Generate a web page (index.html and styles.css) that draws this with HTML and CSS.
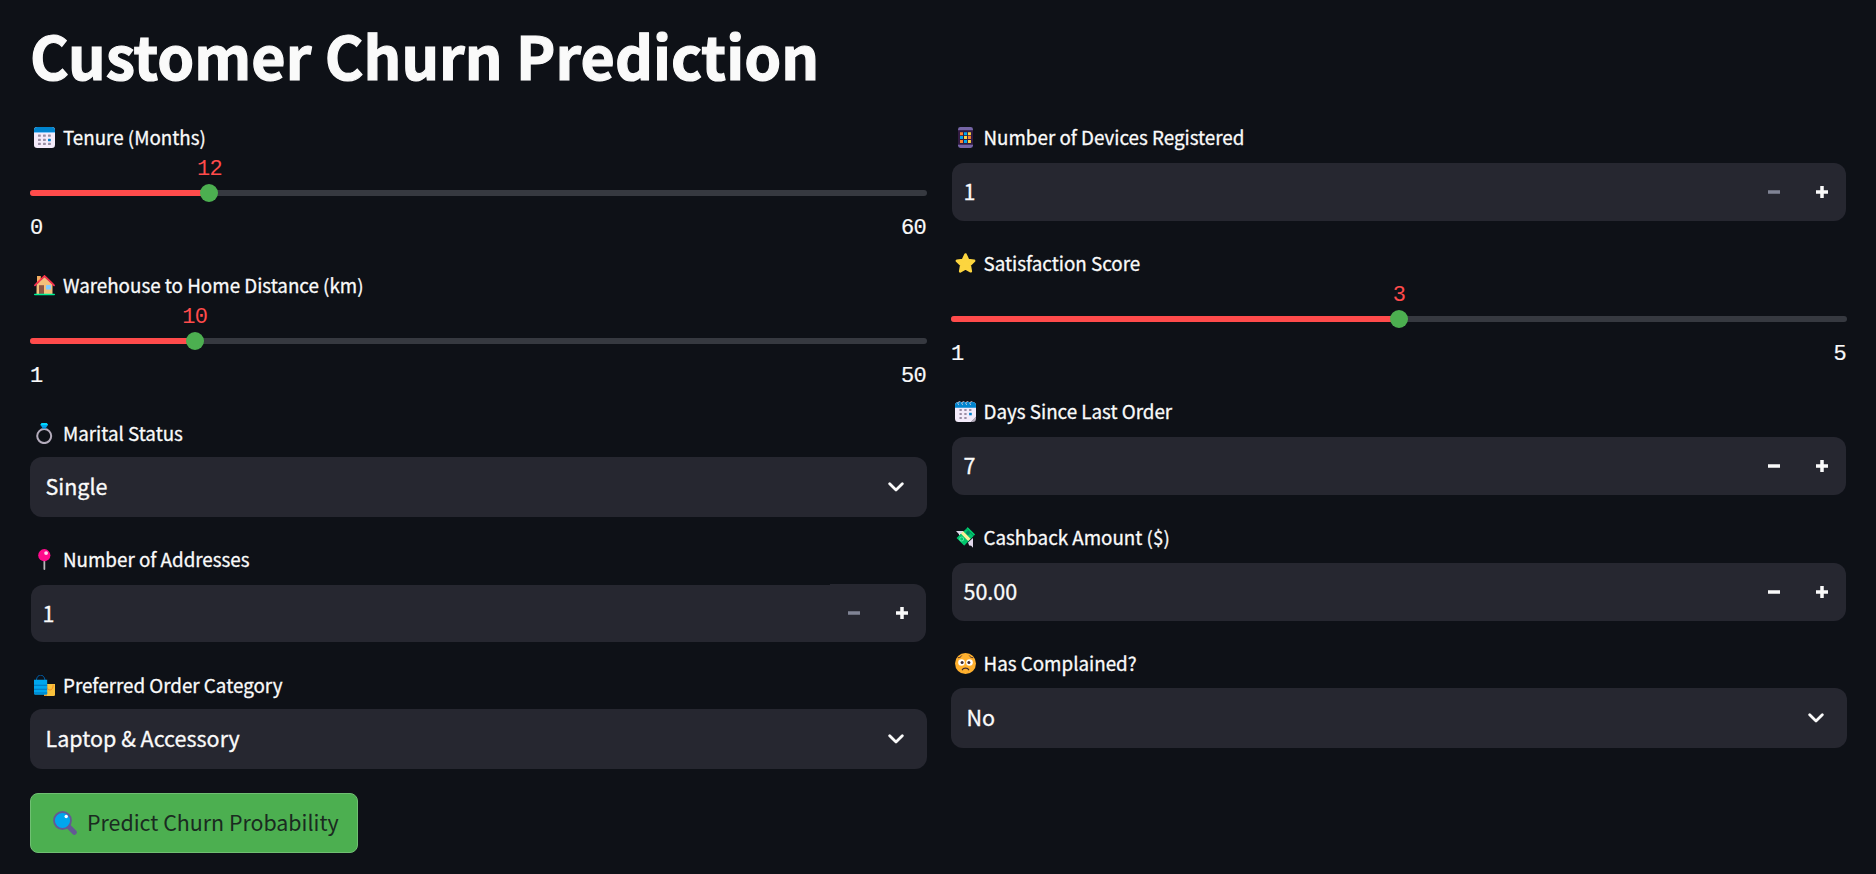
FILE: index.html
```html
<!DOCTYPE html>
<html lang="en">
<head>
<meta charset="utf-8">
<title>Customer Churn Prediction</title>
<link rel="stylesheet" href="styles.css">
</head>
<body>
<main class="page">
  <h1 class="title">Customer Churn Prediction</h1>
  <div class="columns">
    <section class="column">
      <div class="widget">
        <div class="label">
          <svg class="icon" viewBox="0 0 21 21"><rect width="21" height="21" rx="3.2" fill="#f3ebfa"/><path d="M0 5.6V3.2A3.2 3.2 0 0 1 3.2 0h14.6A3.2 3.2 0 0 1 21 3.2v2.4z" fill="#0084ce"/><path d="M0 5.2h21v.7H0z" fill="#83cbff"/><g fill="#998ea4"><rect x="4" y="7.4" width="2.8" height="2.3" rx=".5"/><rect x="9" y="7.4" width="2.8" height="2.3" rx=".5"/><rect x="14" y="7.4" width="2.8" height="2.3" rx=".5"/><rect x="4" y="11.8" width="2.8" height="2.3" rx=".5"/><rect x="9" y="11.8" width="2.8" height="2.3" rx=".5"/><rect x="4" y="15.8" width="2.8" height="2.3" rx=".5"/><rect x="9" y="15.8" width="2.8" height="2.3" rx=".5"/><rect x="14" y="15.8" width="2.8" height="2.3" rx=".5"/></g><rect x="14" y="11.7" width="2.8" height="2.5" rx=".5" fill="#0084ce"/></svg>
          <span>Tenure (Months)</span>
        </div>
        <div class="slider">
          <div class="track"><div class="fill" style="width:20%"></div><div class="thumb" style="left:20%"><span class="value">12</span></div></div>
          <div class="range"><span>0</span><span>60</span></div>
        </div>
      </div>
      <div class="widget">
        <div class="label">
          <svg class="icon" viewBox="0 0 21 21"><path d="M3 1h4v6H3z" fill="#d3883e"/><path d="M3 1h3v6H3z" fill="#f3ad61"/><path d="M2.6 9.5 10.5 2l8 7.5v10h-16z" fill="#f3c07b"/><path d="M.9 10.3 10.5 1l9.6 9.3" fill="none" stroke="#f92f60" stroke-width="1.7" stroke-linecap="round"/><path d="M1.4 9.2 10.5.5l9.1 8.7" fill="none" stroke="#ff3b30" stroke-width=".8"/><path d="M5 10.2h5v8.8H5z" fill="#8c5543"/><rect x="12" y="10" width="5" height="4.6" rx=".5" fill="#83cbff"/><rect x="0" y="18.7" width="21" height="1.6" rx=".8" fill="#00f397"/></svg>
          <span>Warehouse to Home Distance (km)</span>
        </div>
        <div class="slider">
          <div class="track"><div class="fill" style="width:18.367%"></div><div class="thumb" style="left:18.367%"><span class="value">10</span></div></div>
          <div class="range"><span>1</span><span>50</span></div>
        </div>
      </div>
      <div class="widget">
        <div class="label">
          <svg class="icon" viewBox="0 0 21 21"><circle cx="10.2" cy="13.1" r="7" fill="none" stroke="#b4acbc" stroke-width="2"/><path d="m6.4 2 1.3-2h5l1.3 2-2.6 3.4H9z" fill="#00a6ed"/><path d="m6.4 2 1.3-2h5l1.3 2z" fill="#00d8ff"/><path d="M8.2 4.2h4v1.2h-4z" fill="#0084ce"/></svg>
          <span>Marital Status</span>
        </div>
        <div class="select"><span>Single</span><svg class="chevron" viewBox="0 0 16 10"><path d="m1.7 1.7 6.3 6.2 6.3-6.2"/></svg></div>
      </div>
      <div class="widget">
        <div class="label">
          <svg class="icon" viewBox="0 0 21 21"><path d="M9.7 11h1.6v9.4l-.8.6-.8-.6z" fill="#9b9b9b"/><path d="M9.7 11h.8v10l-.8-.6z" fill="#d3d3d3"/><circle cx="10.3" cy="6.2" r="6.1" fill="#ff0a8c"/><circle cx="12.1" cy="4.1" r="1.9" fill="#ffd9ee"/></svg>
          <span>Number of Addresses</span>
        </div>
        <div class="number stepped"><span class="entry">1</span><div class="steps"><svg class="off" viewBox="0 0 12 12"><path d="M0 6h12"/></svg><svg viewBox="0 0 12 12"><path d="M0 6h12M6 0v12"/></svg></div></div>
      </div>
      <div class="widget">
        <div class="label">
          <svg class="icon" viewBox="0 0 21 21"><path d="M10 9h11v10.7a1.3 1.3 0 0 1-1.3 1.3H10z" fill="#f9c23c"/><path d="M13 10c0 7 6.5 7 6.5 0" transform="translate(-.3 -.2)" fill="none" stroke="#f57c1f" stroke-width=".8"/><path d="M10 17h3v4h-3z" fill="#f59a23"/><path d="M2.4 5C3-1.5 10.200-1.500 11 5" fill="none" stroke="#005ea8" stroke-width="1"/><path d="M0 4.700h13.200v13.800a1.300 1.300 0 0 1-1.300 1.300H1.300A1.300 1.300 0 0 1 0 18.500z" fill="#00a6ed"/><path d="M0 10.300h13.200M0 14.200h13.200M0 18h13.200" stroke="#0074ba" stroke-width="1.100"/></svg>
          <span>Preferred Order Category</span>
        </div>
        <div class="select"><span>Laptop &amp; Accessory</span><svg class="chevron" viewBox="0 0 16 10"><path d="m1.700 1.700 6.300 6.200 6.300-6.200"/></svg></div>
      </div>
      <button class="predict" type="button">
        <svg class="lens" viewBox="0 0 24 24"><path d="m15 15 6.300 6.300" stroke="#635994" stroke-width="5" stroke-linecap="round"/><circle cx="9.500" cy="9.500" r="8.500" fill="#00a6ed" stroke="#635994" stroke-width="1.800"/><circle cx="13.200" cy="5.500" r="1.700" fill="#fff"/></svg>
        <span>Predict Churn Probability</span>
      </button>
    </section>
    <section class="column column-right">
      <div class="widget">
        <div class="label tall">
          <svg class="icon" viewBox="0 0 21 21"><rect x="3" width="15" height="21" rx="2.400" fill="#7565a6"/><path d="M3 3.200h15v14.500H3z" fill="#321b41"/><g fill="#ff822d"><path d="M5 5.200h3v3H5zM12.900 9.100h3v3h-3zM5 13h3v3H5z"/></g><g fill="#00a6ed"><path d="M9 5.200h3v3H9zM5 9.100h3v3H5zM9 13h3v3H9z"/></g><g fill="#fcd53f"><path d="M12.900 5.200h3v3h-3zM9 9.100h3v3H9zM12.900 13h3v3h-3z"/></g></svg>
          <span>Number of Devices Registered</span>
        </div>
        <div class="number"><span class="entry">1</span><div class="steps"><svg class="off" viewBox="0 0 12 12"><path d="M0 6h12"/></svg><svg viewBox="0 0 12 12"><path d="M0 6h12M6 0v12"/></svg></div></div>
      </div>
      <div class="widget">
        <div class="label">
          <svg class="icon" viewBox="0 0 21 21"><path d="m10.500 1.500 2.600 5.500 6 .8-4.400 4.300 1.100 6.200-5.300-2.900-5.300 2.900 1.100-6.200L1.900 7.800l6-.8z" fill="#fcd53f" stroke="#fcd53f" stroke-width="2.600" stroke-linejoin="round"/></svg>
          <span>Satisfaction Score</span>
        </div>
        <div class="slider">
          <div class="track"><div class="fill" style="width:50%"></div><div class="thumb" style="left:50%"><span class="value">3</span></div></div>
          <div class="range"><span>1</span><span>5</span></div>
        </div>
      </div>
      <div class="widget">
        <div class="label tall">
          <svg class="icon" viewBox="0 0 21 21"><path d="M0 4.500A3.500 3.500 0 0 1 3.500 1h14A3.500 3.500 0 0 1 21 4.500V16l-5 5H3.500A3.500 3.500 0 0 1 0 17.500z" fill="#f3ebfa"/><path d="M21 15.500 15.800 21h1.700a3.500 3.500 0 0 0 3.500-3.500z" fill="#b4acbc"/><path d="M0 6.800V4.500A3.500 3.500 0 0 1 3.500 1h14A3.500 3.500 0 0 1 21 4.500v2.300z" fill="#0084ce"/><g fill="none" stroke="#d8d0e0" stroke-width="1"><path d="M4 4C1.800 2.500 3 .4 5.300.6M8 4C5.800 2.500 7 .4 9.300.6M12 4c-2.200-1.500-1-3.600 1.300-3.400M16 4c-2.200-1.500-1-3.600 1.300-3.400"/></g><g fill="#998ea4"><path d="M4.500 8h2.300v2H4.500zM9.300 8h2.300v2H9.300zM14.100 8h2.300v2h-2.300zM4.500 12h2.300v2H4.500zM9.300 12h2.300v2H9.300zM4.500 16h2.300v2H4.500zM9.300 16h2.300v2H9.300z"/></g><rect x="14.100" y="11.800" width="2.700" height="2.500" fill="#0084ce"/></svg>
          <span>Days Since Last Order</span>
        </div>
        <div class="number"><span class="entry">7</span><div class="steps"><svg viewBox="0 0 12 12"><path d="M0 6h12"/></svg><svg viewBox="0 0 12 12"><path d="M0 6h12M6 0v12"/></svg></div></div>
      </div>
      <div class="widget">
        <div class="label tall">
          <svg class="icon" viewBox="0 0 21 21"><path d="M1 4h8L4.500 9.500 3.800 7z" fill="#e1d8ec"/><path d="M18 11v9.800l-1.800-2-2-.2-1.200-3.200z" fill="#e1d8ec"/><path d="m12.700.3 7.300 7.200-10.800 11-7.500-7.400z" fill="#008463"/><path d="m12.700.3 7.300 7.200-1 1L11.600 1.400z" fill="#00d26a"/><path d="m11.300 2 7.200 7-9.300 9.500-7.500-7.400z" fill="#00c56b"/><circle cx="13" cy="6" r="1.900" fill="#008463"/><circle cx="6.700" cy="12" r="2" fill="none" stroke="#6ff0ae" stroke-width=".8"/><path d="m5.800 6.500 2.400-2.200 7.300 7.500-2.400 2.300z" fill="#ffef9b"/></svg>
          <span>Cashback Amount ($)</span>
        </div>
        <div class="number"><span class="entry">50.00</span><div class="steps"><svg viewBox="0 0 12 12"><path d="M0 6h12"/></svg><svg viewBox="0 0 12 12"><path d="M0 6h12M6 0v12"/></svg></div></div>
      </div>
      <div class="widget">
        <div class="label tall">
          <svg class="icon" viewBox="0 0 21 21"><circle cx="10.500" cy="10.500" r="10.500" fill="#ffb02e"/><circle cx="6.500" cy="9.500" r="3.300" fill="#fff"/><circle cx="14.500" cy="9.500" r="3.300" fill="#fff"/><circle cx="7.100" cy="9.500" r="1.500" fill="#402a32"/><circle cx="13.900" cy="9.500" r="1.500" fill="#402a32"/><path d="M3.200 4.700c1.600 0 2.700-.6 3.400-1.900M17.800 4.700c-1.600 0-2.700-.6-3.400-1.900" fill="none" stroke="#402a32" stroke-width=".9" stroke-linecap="round"/><path d="M7.300 16.800c.9-2.300 5.500-2.300 6.400 0" fill="none" stroke="#402a32" stroke-width="1.200" stroke-linecap="round"/></svg>
          <span>Has Complained?</span>
        </div>
        <div class="select"><span>No</span><svg class="chevron" viewBox="0 0 16 10"><path d="m1.700 1.700 6.300 6.200 6.300-6.200"/></svg></div>
      </div>
    </section>
  </div>
</main>
</body>
</html>
```
FILE: styles.css
```css
* { box-sizing: border-box; }

body {
  margin: 0;
  background: #0e1117;
  color: #fafafa;
  font-family: "Noto Sans CJK SC", "Noto Sans", sans-serif;
}

.page { height: 874px; padding: 0 29px 0 30px; overflow: hidden; }

.title {
  margin: 0;
  height: 119px;
  padding-top: 14px;
  font-size: 59.1px;
  font-weight: 700;
  line-height: 80px;
  white-space: nowrap;
  -webkit-text-stroke: 1.2px #fafafa;
}

.columns { display: grid; grid-template-columns: 897px 896px; gap: 24px; }
.column { display: flex; flex-direction: column; gap: 24px; }

.label {
  display: flex;
  align-items: flex-start;
  gap: 8px;
  height: 42px;
  padding: 8px 0 0 4px;
  font-size: 18.8px;
  line-height: 20px;
  white-space: nowrap;
  -webkit-text-stroke: .3px #fafafa;
}
.label.tall { height: 43px; }
.column-right .label { padding-left: 3.5px; }
.icon { width: 21px; height: 21px; flex: none; }

.slider { height: 82px; padding-top: 29px; }
.track { position: relative; height: 6px; border-radius: 3px; background: #363940; }
.fill { height: 6px; border-radius: 3px 0 0 3px; background: #ff4b4b; }
.thumb {
  position: absolute;
  top: -6px;
  width: 18px;
  height: 18px;
  margin-left: -9px;
  border-radius: 50%;
  background: #4caf50;
}
.value {
  position: absolute;
  bottom: 20px;
  left: 50%;
  transform: translateX(-50%);
  color: #ff4b4b;
}
.value, .range {
  font-family: "Liberation Mono", monospace;
  font-size: 22px;
  letter-spacing: -.7px;
  line-height: 24px;
}
.range {
  display: flex;
  justify-content: space-between;
  padding: 21px 1px 0 0;
  -webkit-text-stroke: .2px #fafafa;
}

.select {
  display: flex;
  align-items: center;
  justify-content: space-between;
  height: 60px;
  padding: 0 23px 0 15.5px;
  border-radius: 12px;
  background: #262730;
  font-size: 21.5px;
  line-height: 30px;
  -webkit-text-stroke: .3px #fafafa;
}
.select span { padding-bottom: 2px; }
.chevron { width: 16px; height: 10px; fill: none; stroke: #fafafa; stroke-width: 2.8; stroke-linecap: round; stroke-linejoin: round; }

.number {
  display: flex;
  height: 59px;
  padding: 1px 1px 0;
  font-size: 21.5px;
  line-height: 56px;
  -webkit-text-stroke: .3px #fafafa;
}
.entry { flex: 1; padding-left: 11.5px; border-radius: 12px 0 0 12px; background: #262730; }
.steps { display: flex; width: 96px; border-radius: 0 12px 12px 0; background: #262730; }
.steps svg { width: 48px; height: 58px; padding: 23px 18px; fill: none; stroke: #fafafa; stroke-width: 3.5; }
.steps .off { stroke: #808495; }
.stepped { height: 60px; padding-bottom: 1px; }
.stepped .entry { margin-top: 1px; line-height: 55px; }

.predict {
  display: flex;
  align-items: center;
  align-self: flex-start;
  gap: 10px;
  width: 328px;
  height: 60px;
  padding: 0 0 0 22px;
  border: 1px solid #70bf73;
  border-radius: 8px;
  background: #4caf50;
  color: #1a2a20;
  font-family: inherit;
  font-size: 21.4px;
  font-weight: 400;
  line-height: 30px;
  white-space: nowrap;
}
.predict span { padding-bottom: 2px; }
.lens { width: 24px; height: 24px; flex: none; }
```
